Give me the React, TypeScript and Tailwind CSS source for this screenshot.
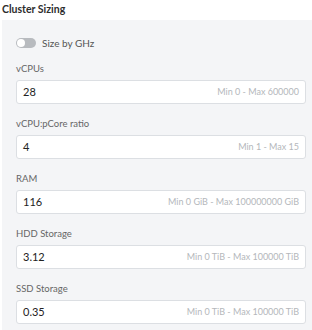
import React from 'react';

type Field = {
    label: string;
    value: string;
    hint: string;
};

const fields: Field[] = [
    {label: 'vCPUs', value: '28', hint: 'Min 0 - Max 600000'},
    {label: 'vCPU:pCore ratio', value: '4', hint: 'Min 1 - Max 15'},
    {label: 'RAM', value: '116', hint: 'Min 0 GiB - Max 100000000 GiB'},
    {label: 'HDD Storage', value: '3.12', hint: 'Min 0 TiB - Max 100000 TiB'},
    {label: 'SSD Storage', value: '0.35', hint: 'Min 0 TiB - Max 100000 TiB'},
];

const App: React.FC = () => {
    return (
        <div className="w-[312px] h-[330px] overflow-hidden bg-white font-['Lato',sans-serif]">
            {/* 제목 */}
            <div className="h-[20px] pl-[2px] pt-[2px] text-[10.5px] font-bold text-[#2d2d2d] leading-[14px]">
                Cluster Sizing
            </div>

            {/* 패널 */}
            <div className="ml-[2px] bg-[#f4f5f7] pl-[14px] pr-[6px] pt-[18px] pb-4">
                <div className="flex items-center gap-[6px] h-[10px] mb-[14px]">
                    <div className="relative w-[20px] h-[10px] rounded-full bg-[#b8bbbf]">
                        <div className="absolute left-[1px] top-[1px] w-[8px] h-[8px] rounded-full bg-white"/>
                    </div>
                    <span className="text-[10px] text-[#555]">Size by GHz</span>
                </div>

                {fields.map((f) => (
                    <div key={f.label} className="mb-[13px]">
                        <div className="h-[14px] mb-[4px] text-[9.5px] leading-[14px] text-[#666]">{f.label}</div>
                        <div className="h-[24px] flex items-center justify-between px-[6px] bg-white border border-[#dcdfe3] rounded-[3px]">
                            <span className="text-[11px] text-[#222]">{f.value}</span>
                            <span className="text-[9px] text-[#b4b7bb]">{f.hint}</span>
                        </div>
                    </div>
                ))}
            </div>
        </div>
    );
};

export default App;
